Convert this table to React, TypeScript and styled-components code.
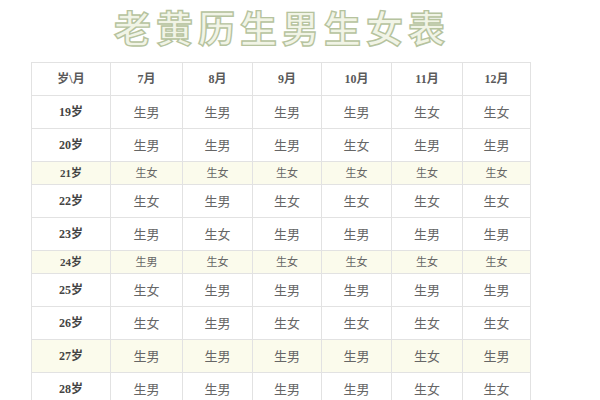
import React from "react";
import styled, { createGlobalStyle } from "styled-components";

const GlobalStyle = createGlobalStyle`
  html, body {
    margin: 0;
    padding: 0;
    background: #ffffff;
  }
  body {
    font-family: "Noto Sans CJK SC", "Noto Sans", sans-serif;
  }
`;

type Row = {
  age: string;
  cells: string[];
  short?: boolean;
  tinted?: boolean;
};

const months = ["7月", "8月", "9月", "10月", "11月", "12月"];

const rows: Row[] = [
  { age: "19岁", cells: ["生男", "生男", "生男", "生男", "生女", "生女"] },
  { age: "20岁", cells: ["生男", "生男", "生男", "生女", "生男", "生男"] },
  { age: "21岁", cells: ["生女", "生女", "生女", "生女", "生女", "生女"], short: true, tinted: true },
  { age: "22岁", cells: ["生女", "生男", "生女", "生女", "生女", "生女"] },
  { age: "23岁", cells: ["生男", "生女", "生男", "生男", "生男", "生男"] },
  { age: "24岁", cells: ["生男", "生女", "生女", "生女", "生女", "生女"], short: true, tinted: true },
  { age: "25岁", cells: ["生女", "生男", "生男", "生男", "生男", "生男"] },
  { age: "26岁", cells: ["生女", "生男", "生女", "生女", "生女", "生女"] },
  { age: "27岁", cells: ["生男", "生男", "生男", "生男", "生女", "生男"], tinted: true },
  { age: "28岁", cells: ["生男", "生男", "生男", "生男", "生女", "生女"] },
];

const Page = styled.div`
  width: 600px;
  height: 400px;
  overflow: hidden;
  display: flex;
  flex-direction: column;
  align-items: flex-start;
`;

const Title = styled.h1`
  margin: 2px 0 0 114px;
  height: 50px;
  font-family: "Noto Sans CJK SC", sans-serif;
  font-weight: 700;
  font-size: 37px;
  line-height: 50px;
  letter-spacing: 5px;
  color: #f1f4e6;
  -webkit-text-stroke: 1.4px #b6c39e;
`;

const Table = styled.table`
  margin: 10px 0 0 31px;
  border-collapse: collapse;
  table-layout: fixed;
  width: 499px;
  border: 1px solid #dedede;
`;

const Col = styled.col<{ $w: number }>`
  width: ${({ $w }) => $w}px;
`;

const Tr = styled.tr<{ $short?: boolean; $tinted?: boolean }>`
  height: ${({ $short }) => ($short ? 23 : 33)}px;
  background: ${({ $tinted }) => ($tinted ? "#fbfbec" : "#ffffff")};
`;

const Th = styled.th`
  border: 1px solid #e2e2e2;
  font-family: "Liberation Serif", "Noto Sans CJK SC", serif;
  font-weight: 700;
  font-size: 12px;
  color: #5a5a5a;
  text-align: center;
  padding: 0 0 2px;
`;

const AgeCell = styled.td<{ $short?: boolean }>`
  border: 1px solid #e2e2e2;
  font-family: "Liberation Serif", "Noto Sans CJK SC", serif;
  font-weight: 700;
  font-size: ${({ $short }) => ($short ? 11 : 12)}px;
  color: #444;
  text-align: center;
  padding: 0 0 2px;
`;

const Cell = styled.td<{ $short?: boolean }>`
  border: 1px solid #e2e2e2;
  font-family: "Noto Sans CJK SC", sans-serif;
  font-weight: 400;
  font-size: ${({ $short }) => ($short ? 11 : 13)}px;
  color: #666;
  text-align: center;
  padding: 0 0 2px;
`;

const widths = [79, 72, 70, 69, 70, 71, 68];

export default function App() {
  return (
    <>
      <GlobalStyle />
      <Page>
        <Title>老黄历生男生女表</Title>
        <Table>
          <colgroup>
            {widths.map((w, i) => (
              <Col key={i} $w={w} />
            ))}
          </colgroup>
          <thead>
            <Tr>
              <Th>岁\月</Th>
              {months.map((m) => (
                <Th key={m}>{m}</Th>
              ))}
            </Tr>
          </thead>
          <tbody>
            {rows.map((r) => (
              <Tr key={r.age} $short={r.short} $tinted={r.tinted}>
                <AgeCell $short={r.short}>{r.age}</AgeCell>
                {r.cells.map((c, i) => (
                  <Cell key={i} $short={r.short}>
                    {c}
                  </Cell>
                ))}
              </Tr>
            ))}
          </tbody>
        </Table>
      </Page>
    </>
  );
}
